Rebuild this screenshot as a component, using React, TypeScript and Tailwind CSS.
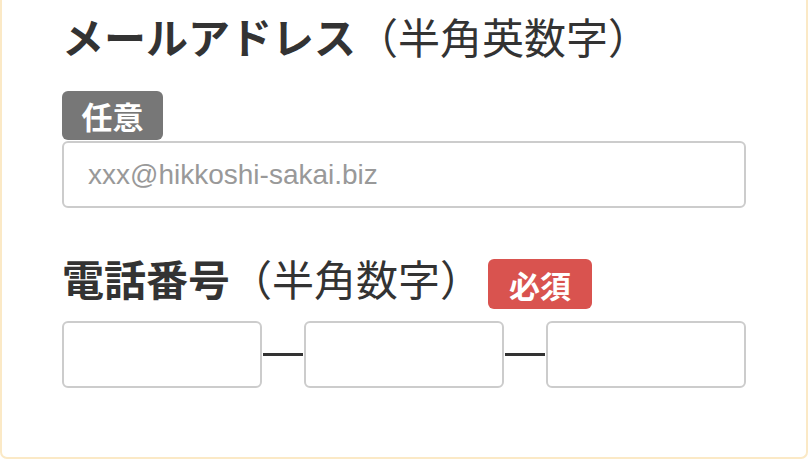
import React from "react";

const jp = { fontFamily: '"Noto Sans CJK JP", "Noto Sans", sans-serif' };

export default function App() {
  return (
    <div className="w-[808px] h-[461px] bg-white overflow-hidden" style={jp}>
      <div className="h-[459px] border-2 border-t-0 border-[#fbe9c6] rounded-b-[7px] bg-white pl-[60px] pr-[60px] pt-[12px] text-[#333]">
        <h2 className="text-[42px] leading-[48px] m-0 whitespace-nowrap">
          <span className="font-bold">メールアドレス</span>
          <span className="font-normal">（半角英数字）</span>
        </h2>
        <div className="mt-[31px] flex">
          <span className="inline-flex items-center justify-center h-[49px] w-[101px] rounded-[6px] bg-[#777777] text-white font-bold text-[31px] leading-none">
            任意
          </span>
        </div>
        <input
          type="text"
          placeholder="xxx@hikkoshi-sakai.biz"
          className="block w-[684px] h-[67px] mt-[1px] rounded-[6px] border-2 border-[#cccccc] bg-white px-[24px] text-[28px] text-[#333] placeholder:text-[#999] outline-none"
          style={{ fontFamily: '"Liberation Sans", Arial, sans-serif' }}
        />
        <div className="mt-[46px] flex items-start">
          <h2 className="text-[42px] leading-[48px] m-0 whitespace-nowrap">
            <span className="font-bold">電話番号</span>
            <span className="font-normal">（半角数字）</span>
          </h2>
          <span className="ml-[6px] mt-[5px] inline-flex items-center justify-center h-[50px] w-[104px] rounded-[6px] bg-[#d9534f] text-white font-bold text-[31px] leading-none">
            必須
          </span>
        </div>
        <div className="mt-[12px] flex items-center">
          <input type="tel" className="block w-[200px] h-[67px] rounded-[6px] border-2 border-[#cccccc] bg-white outline-none" />
          <div className="w-[42px] flex justify-center">
            <div className="w-[40px] h-[3px] bg-[#333]" />
          </div>
          <input type="tel" className="block w-[200px] h-[67px] rounded-[6px] border-2 border-[#cccccc] bg-white outline-none" />
          <div className="w-[42px] flex justify-center">
            <div className="w-[40px] h-[3px] bg-[#333]" />
          </div>
          <input type="tel" className="block w-[200px] h-[67px] rounded-[6px] border-2 border-[#cccccc] bg-white outline-none" />
        </div>
      </div>
    </div>
  );
}
